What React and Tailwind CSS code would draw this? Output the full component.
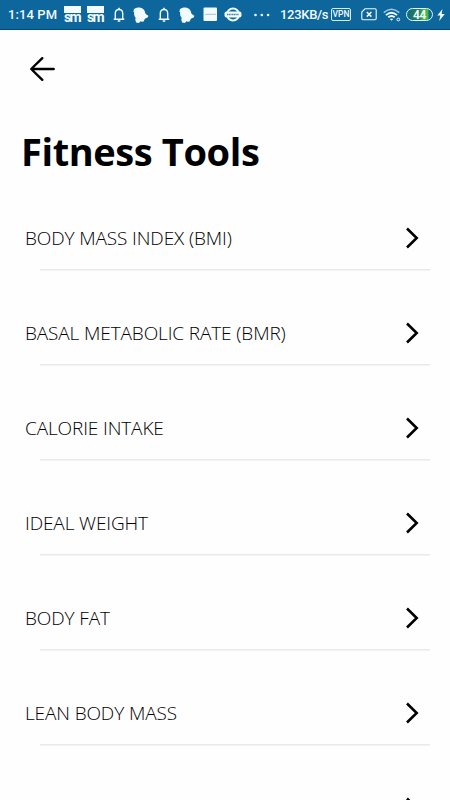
import React from "react";

const tools = [
  "BODY MASS INDEX (BMI)",
  "BASAL METABOLIC RATE (BMR)",
  "CALORIE INTAKE",
  "IDEAL WEIGHT",
  "BODY FAT",
  "LEAN BODY MASS",
  "",
];

function SmIcon() {
  return (
    <span className="flex h-[17px] w-[17px] shrink-0 flex-col">
      <span className="h-[7px] w-full shrink-0 bg-[#f4fbff]" />
      <span className="-mt-px h-[11px] font-['Roboto',sans-serif] text-[14px] leading-[11px] font-bold tracking-[-1.8px] whitespace-nowrap">
        sm
      </span>
    </span>
  );
}

function BellOutline() {
  return (
    <svg width="12" height="16" viewBox="0 0 12 16" fill="none" stroke="currentColor" strokeWidth="1.4" className="shrink-0">
      <path d="M.7 12.2h10.6M2.3 12V6.5C2.3 3.9 3.8 2.5 6 2.5s3.7 1.4 3.7 4V12" />
      <path d="M6 .8v1.5M4.7 14h2.6" strokeWidth="1.6" />
    </svg>
  );
}

function BellSolid() {
  return (
    <svg width="16" height="16" viewBox="0 0 16 16" fill="currentColor" className="shrink-0">
      <path d="M1 2.1C2.8.5 7.3-.2 9.5 1.5c2.8 2 2.4 4.3 3.3 5.6l2.5 1.7-.3 1.5-3.1 1.4-1.3 2.8-2 .2-1-.4-1.8 1.6-2.7-.5-.8-2.6.3-2.2C1.2 9 .9 7.2 1.2 5.5L.4 4.6z" />
    </svg>
  );
}

function StatusBar() {
  return (
    <header className="flex h-[30px] shrink-0 items-center border-b border-[#07477c] bg-[#0d669c] font-['Roboto',sans-serif] text-[#f2fbff]">
      <span className="ml-[8px] w-[56px] shrink-0 text-[13px] font-medium tracking-[0.1px] whitespace-nowrap">1:14 PM</span>
      <SmIcon />
      <span className="w-[6px] shrink-0" />
      <SmIcon />
      <span className="w-[9px] shrink-0" />
      <BellOutline />
      <span className="w-[8px] shrink-0" />
      <BellSolid />
      <span className="w-[9px] shrink-0" />
      <BellOutline />
      <span className="w-[9px] shrink-0" />
      <BellSolid />
      <svg width="15" height="15" viewBox="0 0 15 15" className="ml-[8px] shrink-0">
        <rect x=".5" y=".5" width="13.5" height="13.5" rx="1" fill="currentColor" />
        <path d="M2 7.8l2-.5h9" fill="none" stroke="#93b8c8" strokeWidth=".8" />
      </svg>
      <svg width="18" height="15" viewBox="0 0 18 15" className="ml-[6px] shrink-0">
        <circle cx="9" cy="7.5" r="6" fill="none" stroke="currentColor" strokeWidth="2" />
        <rect x=".5" y="4.6" width="17" height="5.8" rx="2" fill="currentColor" />
        <path d="M3 7.5h12" stroke="#417f9d" strokeWidth="1.3" strokeDasharray="1.2 .5" />
      </svg>
      <svg width="17" height="4" viewBox="0 0 17 4" fill="currentColor" className="ml-[12px] shrink-0">
        <circle cx="1.5" cy="2" r="1.3" />
        <circle cx="7.8" cy="2" r="1.3" />
        <circle cx="14.1" cy="2" r="1.3" />
      </svg>
      <span className="ml-[9px] w-[51px] shrink-0 text-[13px] font-medium tracking-[-0.3px] whitespace-nowrap">123KB/s</span>
      <span className="flex h-[13px] w-[20px] shrink-0 items-center justify-center rounded-[2px] border border-[#d6edf5] text-[8.5px] leading-none font-medium">
        VPN
      </span>
      <svg width="16" height="13" viewBox="0 0 16 13" fill="none" stroke="currentColor" className="ml-[10px] shrink-0">
        <path d="M4 .8h10q1.2 0 1.2 1.2v8.5q0 1.2-1.2 1.2H2Q.8 11.7.8 10.5V4z" strokeWidth="1.1" />
        <path d="M5.8 4l4.6 4.6m0-4.6L5.8 8.6" strokeWidth="1.5" />
      </svg>
      <svg width="18" height="14" viewBox="0 0 18 14" fill="none" stroke="currentColor" className="ml-[6px] shrink-0">
        <path d="M.7 4.6q7.8-6.7 15.6 0" strokeWidth="1.4" opacity=".65" />
        <path d="M3 7.1q5.5-4.7 11 0M5.3 9.3q3.2-2.6 6.4 0" strokeWidth="1.9" />
        <path d="M6.8 11q1.7-1.2 3.4 0L8.5 12.7z" fill="currentColor" stroke="none" />
        <circle cx="15.3" cy="11.5" r="1.4" strokeWidth="1" />
      </svg>
      <span className="ml-[5px] flex h-[13px] w-[27px] shrink-0 items-center justify-center rounded-full border border-[#e5f7ff] bg-[linear-gradient(90deg,#0d669c_0%,#18745f_15%,#238266_50%,#45c238_65%,#45b943_82%,#0d669c_90%)] text-[12px] leading-none font-bold tracking-[-0.4px]">
        44
      </span>
      <svg width="8" height="12" viewBox="0 0 8 12" fill="currentColor" className="ml-[4px] shrink-0">
        <path d="M5.5 0L.3 6.6h3L2.2 12 7.8 5H4.6z" />
      </svg>
    </header>
  );
}

export default function App() {
  return (
    <div className="flex h-[800px] w-[450px] flex-col overflow-hidden bg-[#fefefe] font-['Open_Sans',sans-serif] text-black">
      <StatusBar />
      <nav className="flex h-[78px] shrink-0 items-center pl-[29px]">
        <button aria-label="Back">
          <svg width="27" height="26" viewBox="0 0 27 26" fill="none" stroke="currentColor" strokeWidth="2.4" strokeLinecap="round">
            <path d="M24.7 13H2.5M13.3 2.2L2.2 13l11.1 10.8" strokeLinejoin="round" />
          </svg>
        </button>
      </nav>
      <h1 className="h-[68px] shrink-0 pl-[21px] text-[38px] leading-[87px] font-bold tracking-[-0.4px] whitespace-nowrap">Fitness Tools</h1>
      <main>
        {tools.map((name, i) => (
          <section key={i} className="flex h-[95px] flex-col justify-end">
            <div className="flex h-[63px] items-center justify-between pr-[31px] pl-[25px]">
              <span className="text-[19px] leading-[26px] font-light tracking-[-0.12px] whitespace-nowrap">{name}</span>
              <svg width="14" height="22" viewBox="0 0 14 22" fill="none" stroke="currentColor" strokeWidth="2.6">
                <path d="M2 1.5l9.7 9.5L2 20.5" />
              </svg>
            </div>
            <div className="mr-[20px] ml-[40px] h-[2px] shrink-0 border-t border-[#e9e9e9] bg-[#f3f3f3]" />
          </section>
        ))}
      </main>
    </div>
  );
}
